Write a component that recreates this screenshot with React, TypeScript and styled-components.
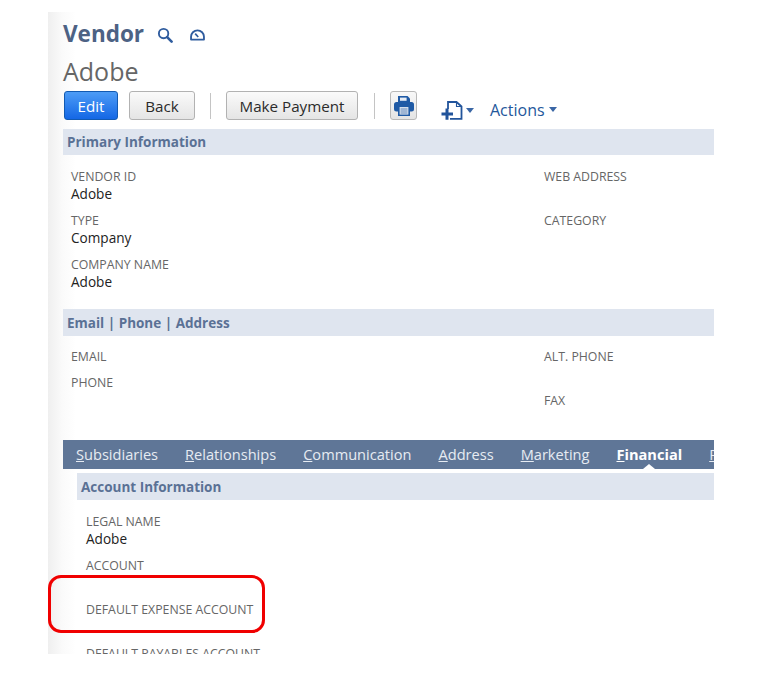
import styled, { createGlobalStyle } from 'styled-components';

const primaryFields = [
  { label: 'VENDOR ID', value: 'Adobe' },
  { label: 'TYPE', value: 'Company' },
  { label: 'COMPANY NAME', value: 'Adobe' },
];

const tabs = [
  { key: 'S', rest: 'ubsidiaries' },
  { key: 'R', rest: 'elationships' },
  { key: 'C', rest: 'ommunication' },
  { key: 'A', rest: 'ddress' },
  { key: 'M', rest: 'arketing' },
  { key: 'F', rest: 'inancial', active: true },
  { key: 'P', rest: 'references' },
];

const App = () => {
  return (
    <>
      <GlobalStyle />
      <Sheet>
        <Highlight />
        <Content>
          <TitleRow>
            <Title>Vendor</Title>
            <IconSlot>
              <svg width="16" height="16" viewBox="0 0 17 17" fill="none" stroke="#2f5c9e">
                <circle cx="7" cy="7" r="5" strokeWidth="2" />
                <path d="M10.8 10.8 L15.5 15.5" strokeWidth="2.8" strokeLinecap="round" />
              </svg>
            </IconSlot>
            <IconSlot>
              <svg width="15" height="12" viewBox="0 0 16 13" fill="none" stroke="#2f5c9e">
                <path d="M1 11.5 V8.5 A7 7 0 0 1 15 8.5 V11.5 Z" strokeWidth="2" strokeLinejoin="round" />
                <path d="M5.5 5 L8.8 8.6" strokeWidth="1.8" />
              </svg>
            </IconSlot>
          </TitleRow>
          <RecordName>Adobe</RecordName>
          <Toolbar>
            <Button primary width={54} gap={11}>
              Edit
            </Button>
            <Button width={66} gap={15}>
              Back
            </Button>
            <Divider />
            <Button width={132} gap={16}>
              Make Payment
            </Button>
            <Divider />
            <PrintButton aria-label="Print">
              <svg width="22" height="22" viewBox="0 0 22 22">
                <path d="M5 1 H14.5 L17 3.5 V8 H5 Z" fill="#1f5aa5" />
                <path d="M7 2.6 H13.6 V5.8 H7 Z" fill="#e6ecf5" />
                <rect x="1" y="7" width="20" height="9.5" rx="2.5" fill="#1f5aa5" />
                <rect x="5" y="11" width="12" height="10" fill="#1f5aa5" />
                <rect x="6.6" y="12" width="8.8" height="7.6" fill="#d5deeb" />
                <path d="M7.6 14 H14.4 M7.6 16 H14.4 M7.6 18 H14.4" stroke="#5c84b8" strokeWidth="0.9" />
              </svg>
            </PrintButton>
            <NewRecord>
              <svg width="22" height="19" viewBox="0 0 22 19" fill="none" stroke="#22549b">
                <path d="M7 8 V1 H15.5 L20.5 5.5 V17.8 H9" strokeWidth="1.8" />
                <path d="M15.5 1 V5.5 H20.5" strokeWidth="1.1" />
                <path d="M0.5 13 H12 M6 7.4 V18.8" strokeWidth="3" />
              </svg>
              <Caret />
            </NewRecord>
            <ActionsMenu>
              Actions
              <Caret />
            </ActionsMenu>
          </Toolbar>

          <SectionBar>Primary Information</SectionBar>
          <FieldColumns>
            <FieldStack>
              {primaryFields.map((field) => (
                <Field key={field.label}>
                  <FieldLabel>{field.label}</FieldLabel>
                  <FieldValue>{field.value}</FieldValue>
                </Field>
              ))}
            </FieldStack>
            <FieldStack>
              <Field>
                <FieldLabel>WEB ADDRESS</FieldLabel>
              </Field>
              <Field>
                <FieldLabel>CATEGORY</FieldLabel>
              </Field>
            </FieldStack>
          </FieldColumns>

          <SectionBar tall>Email | Phone | Address</SectionBar>
          <ContactColumns>
            <FieldStack>
              <ShortField>
                <FieldLabel>EMAIL</FieldLabel>
              </ShortField>
              <ShortField>
                <FieldLabel>PHONE</FieldLabel>
              </ShortField>
            </FieldStack>
            <FieldStack>
              <Field>
                <FieldLabel>ALT. PHONE</FieldLabel>
              </Field>
              <Field>
                <FieldLabel>FAX</FieldLabel>
              </Field>
            </FieldStack>
          </ContactColumns>

          <TabBar>
            {tabs.map((tab) => (
              <Tab key={tab.key} active={tab.active}>
                <u>{tab.key}</u>
                {tab.rest}
              </Tab>
            ))}
          </TabBar>

          <TabPanel>
            <SectionBar tall>Account Information</SectionBar>
            <AccountFields>
              <Field>
                <FieldLabel>LEGAL NAME</FieldLabel>
                <FieldValue>Adobe</FieldValue>
              </Field>
              <Field>
                <FieldLabel>ACCOUNT</FieldLabel>
              </Field>
              <Field>
                <FieldLabel>DEFAULT EXPENSE ACCOUNT</FieldLabel>
              </Field>
              <Field>
                <FieldLabel>DEFAULT PAYABLES ACCOUNT</FieldLabel>
              </Field>
            </AccountFields>
          </TabPanel>
        </Content>
      </Sheet>
    </>
  );
};

const GlobalStyle = createGlobalStyle`
  html, body {
    margin: 0;
    padding: 0;
    background: #fff;
  }
  body {
    font-family: "Open Sans", "Liberation Sans", sans-serif;
  }
`;

const Sheet = styled.div`
  position: relative;
  box-sizing: border-box;
  margin: 12px 0 0 48px;
  width: 722px;
  height: 642px;
  overflow: hidden;
  padding-left: 15px;
  background: linear-gradient(to right, #efefef 0, #fafafa 14px, #fff 28px);
`;

const Highlight = styled.div`
  position: absolute;
  left: 0;
  top: 563px;
  box-sizing: border-box;
  width: 217px;
  height: 58px;
  border: 3px solid #f00000;
  border-radius: 13px;
`;

const Content = styled.div`
  width: 651px;
`;

const TitleRow = styled.div`
  display: flex;
  align-items: center;
  height: 44px;
`;

const Title = styled.h1`
  margin: 0 13px 0 0;
  font-size: 22.5px;
  line-height: 44px;
  font-weight: 700;
  color: #4d6284;
`;

const IconSlot = styled.span`
  display: flex;
  align-items: center;
  margin-right: 17px;
  margin-top: 2px;
`;

const RecordName = styled.div`
  height: 35px;
  font-size: 25px;
  line-height: 31px;
  color: #666;
`;

const Toolbar = styled.div`
  display: flex;
  align-items: center;
  height: 29px;
  padding-left: 1px;
`;

const Button = styled.button<{ primary?: boolean; width: number; gap: number }>`
  box-sizing: border-box;
  width: ${(props) => props.width}px;
  height: 29px;
  margin-right: ${(props) => props.gap}px;
  padding: 0;
  font-family: inherit;
  font-size: 15.2px;
  font-weight: 500;
  border-radius: 3px;
  color: ${(props) => (props.primary ? '#fff' : '#2b2b2b')};
  border: 1px solid ${(props) => (props.primary ? '#125ab2' : '#b2b2b2')};
  background: ${(props) =>
    props.primary
      ? 'linear-gradient(to bottom, #4d9cf6, #1467e5)'
      : 'linear-gradient(to bottom, #fafafa, #e5e5e5)'};
`;

const Divider = styled.span`
  width: 1px;
  height: 26px;
  margin-right: 15px;
  background: #c4c4c4;
`;

const PrintButton = styled.button`
  display: flex;
  align-items: center;
  justify-content: center;
  box-sizing: border-box;
  width: 27px;
  height: 29px;
  padding: 0;
  margin-right: 24px;
  border: 1px solid #b8b8b8;
  border-radius: 3px;
  background: linear-gradient(to bottom, #f8f8f8, #e4e4e4);
`;

const NewRecord = styled.span`
  display: flex;
  align-items: center;
  gap: 3px;
  margin-top: 9px;
  margin-right: 16px;
`;

const Caret = styled.span`
  display: inline-block;
  width: 0;
  height: 0;
  border-left: 4px solid transparent;
  border-right: 4px solid transparent;
  border-top: 5px solid #3a66a5;
`;

const ActionsMenu = styled.span`
  display: flex;
  align-items: center;
  gap: 4px;
  margin-top: 8px;
  font-size: 16px;
  color: #24579b;
`;

const SectionBar = styled.div<{ tall?: boolean }>`
  box-sizing: border-box;
  height: ${(props) => (props.tall ? 27 : 26)}px;
  margin-top: ${(props) => (props.tall ? 0 : 9)}px;
  padding-left: 4px;
  font-size: 13.5px;
  font-weight: 700;
  line-height: ${(props) => (props.tall ? 28 : 26)}px;
  color: #5a7195;
  background: #dfe5ef;
`;

const FieldColumns = styled.div`
  display: grid;
  grid-template-columns: 473px 1fr;
  height: 154px;
  box-sizing: border-box;
  padding: 14px 0 0 8px;
`;

const ContactColumns = styled(FieldColumns)`
  height: 104px;
  padding-top: 13px;
`;

const FieldStack = styled.div`
  display: flex;
  flex-direction: column;
`;

const Field = styled.div`
  height: 44px;
  flex-shrink: 0;
`;

const ShortField = styled.div`
  height: 26px;
`;

const FieldLabel = styled.div`
  font-size: 12.3px;
  line-height: 16px;
  color: #666;
  white-space: nowrap;
`;

const FieldValue = styled.div`
  font-size: 13.6px;
  line-height: 17px;
  color: #222;
`;

const TabBar = styled.div`
  display: flex;
  gap: 27px;
  height: 29px;
  padding-left: 13px;
  overflow: hidden;
  background: #5f7697;
`;

const Tab = styled.span<{ active?: boolean }>`
  position: relative;
  font-size: 14.6px;
  line-height: 29px;
  white-space: nowrap;
  color: ${(props) => (props.active ? '#fff' : '#e6ebf2')};
  font-weight: ${(props) => (props.active ? 700 : 400)};

  ${(props) =>
    props.active &&
    `
    &::after {
      content: '';
      position: absolute;
      left: 50%;
      bottom: 0;
      margin-left: -6px;
      border-left: 6px solid transparent;
      border-right: 6px solid transparent;
      border-bottom: 5px solid #fff;
    }
  `}
`;

const TabPanel = styled.div`
  padding: 4px 0 0 14px;
`;

const AccountFields = styled.div`
  padding: 14px 0 0 9px;
`;

export default App;
